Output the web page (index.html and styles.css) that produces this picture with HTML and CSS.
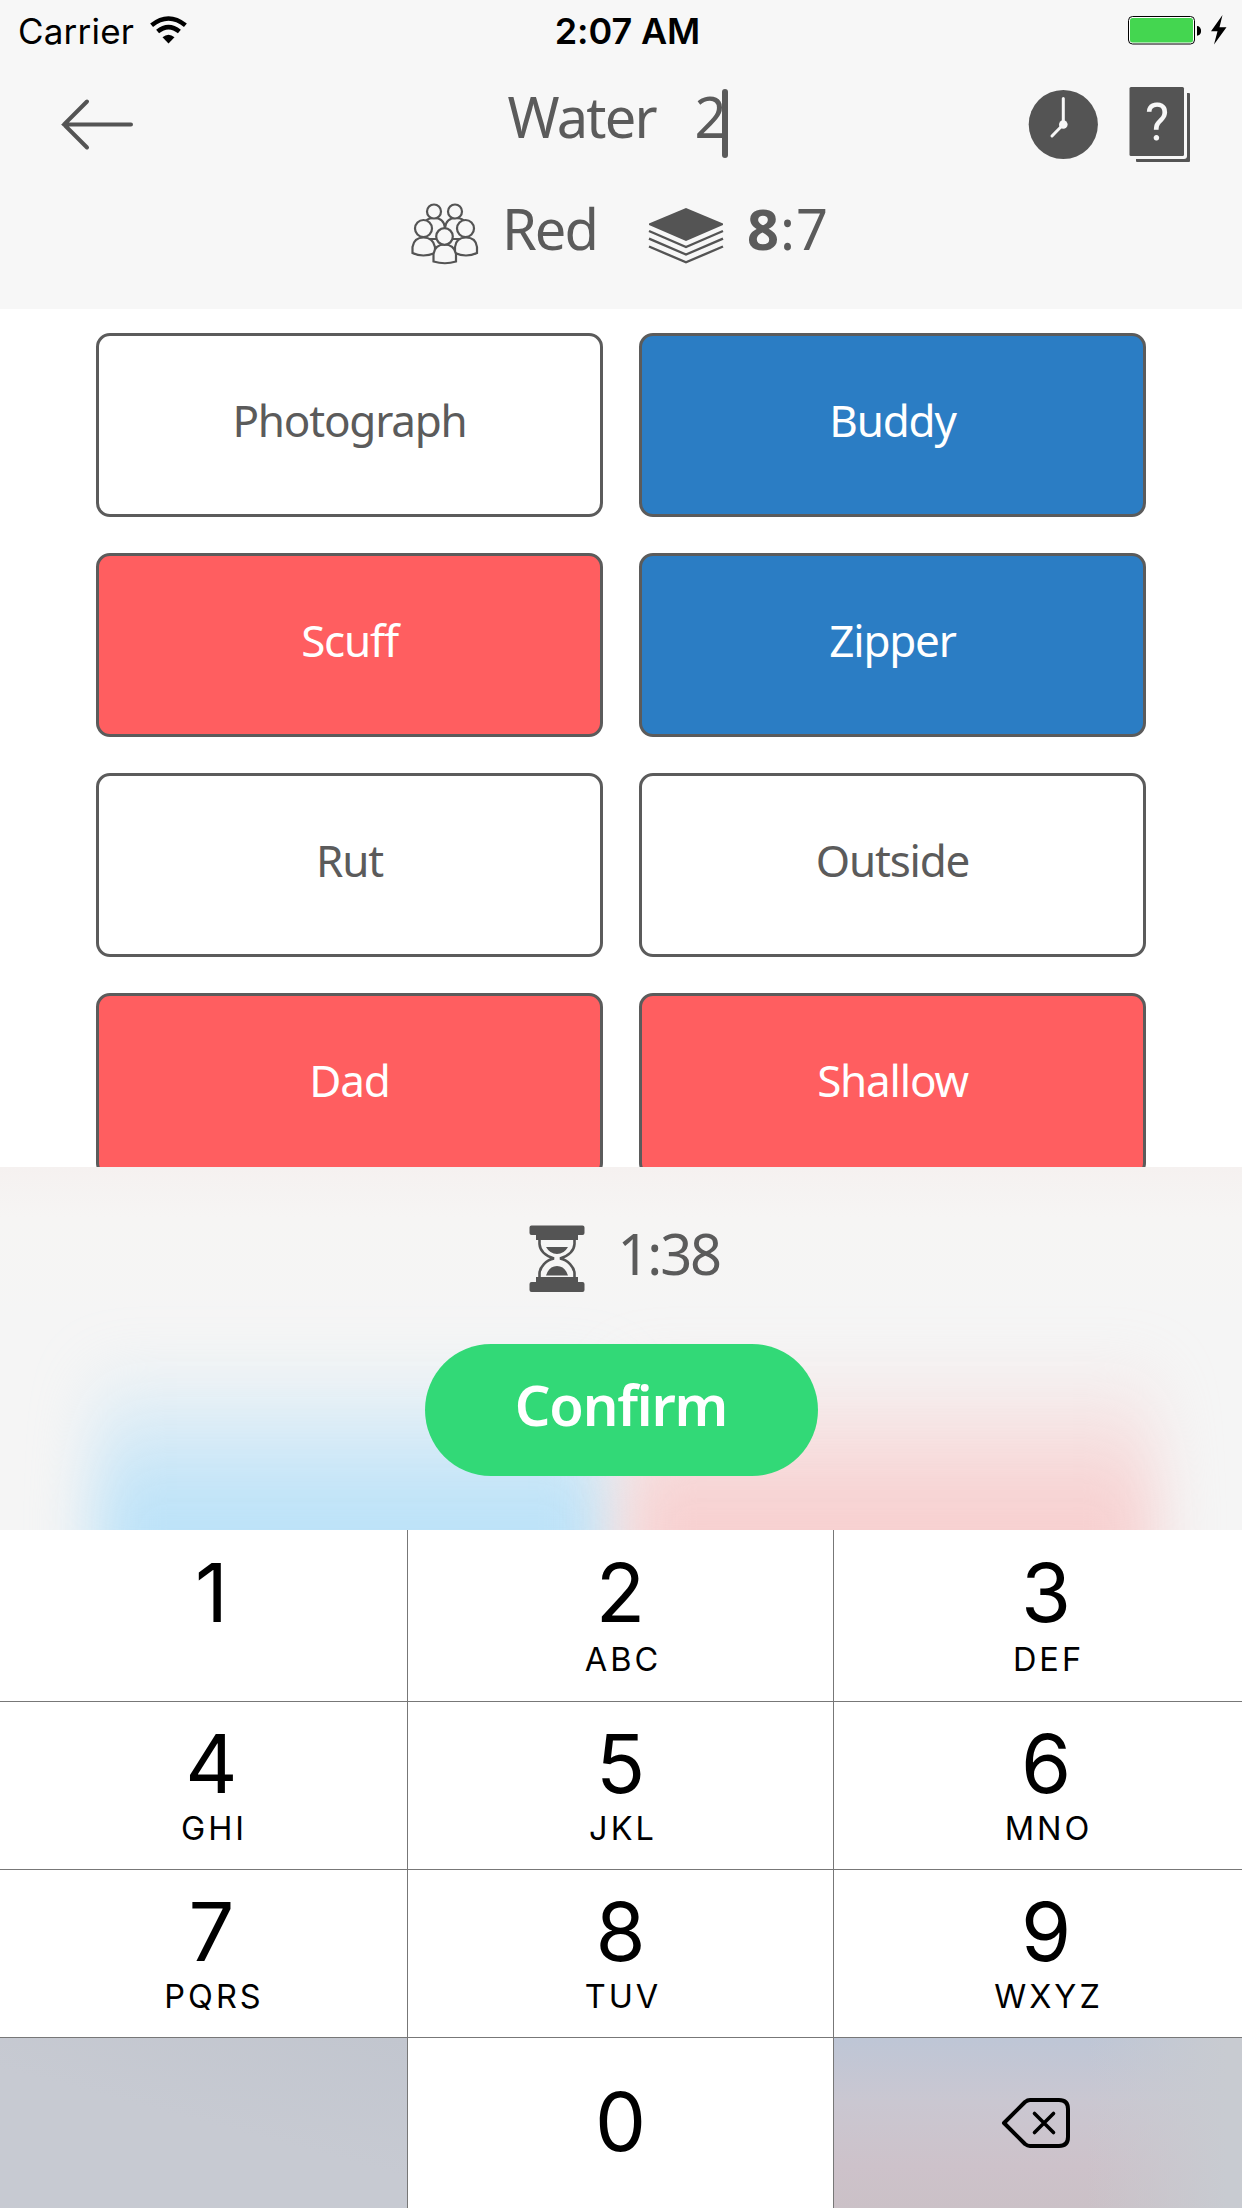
FILE: index.html
```html
<!DOCTYPE html>
<html lang="en">
<head>
<meta charset="utf-8">
<title>Water 2</title>
<link rel="stylesheet" href="styles.css">
</head>
<body>
<div class="screen">
  <header class="header">
    <div class="status">
      <div class="status-left">
        <span class="carrier">Carrier</span>
        <svg class="wifi" width="37" height="28" viewBox="0 0 37 28">
          <g fill="none" stroke="#000" stroke-width="4.6">
            <path d="M1.6 9.2Q18.500 -4.200 35.400 9.200"/>
            <path d="M7.600 15.600Q18.500 6.600 29.400 15.600"/>
          </g>
          <path d="M12.500 21.300Q18.500 16.200 24.500 21.300L18.500 27.500Z"/>
        </svg>
      </div>
      <span class="time">2:07 AM</span>
      <svg class="battery" width="100" height="32" viewBox="0 0 100 32">
        <rect x="0.500" y="2.500" width="66" height="27.500" rx="4" fill="#fff" stroke="#000"/>
        <rect x="2" y="4" width="63" height="24.500" rx="2.500" fill="#44d650"/>
        <path d="M69 12a4 4.800 0 0 1 0 9.800z"/>
        <path d="M94.500 1L83 17.200h6.500L86 30.500 98.500 13.300h-7z"/>
      </svg>
    </div>
    <div class="navbar">
      <svg class="back" width="74" height="54" viewBox="0 0 74 54">
        <path d="M27 3.500L4 26.500 27 49.500M4 26.500H71" fill="none" stroke="#545454" stroke-width="4" stroke-linecap="round"/>
      </svg>
      <div class="clue"><span class="word">Water</span><span class="count">2</span><i class="caret"></i></div>
      <div class="actions">
        <svg width="70" height="78" viewBox="0 0 70 78">
          <circle cx="35.300" cy="39.500" r="34.600" fill="#545454"/>
          <path d="M35.300 13.500V39.500L24 51" fill="none" stroke="#f7f7f7" stroke-width="3" stroke-linecap="round"/>
          <circle cx="35.300" cy="39.500" r="4.300" fill="#f7f7f7"/>
        </svg>
        <svg width="62" height="78" viewBox="0 0 62 78">
          <rect x="7" y="8" width="54" height="69" rx="1" fill="#545454"/>
          <path d="M0 0H58V71a3 3 0 0 1-3 3H0z" fill="#f7f7f7"/>
          <rect x="0.500" y="2" width="54.500" height="69" rx="1.500" fill="#545454"/>
          <text x="28" y="55" text-anchor="middle" class="help-mark">?</text>
        </svg>
      </div>
    </div>
    <div class="info">
      <svg class="people" width="68" height="62" viewBox="0 0 68 62">
        <g fill="#f7f7f7" stroke="#545454" stroke-width="2.2">
          <path d="M12 36V25Q13 15 23 15T34 25V36Z"/><circle cx="23" cy="8.500" r="7"/>
          <path d="M34 36V25Q35 15 45 15T56 25V36Z"/><circle cx="44" cy="8.500" r="7"/>
          <path d="M1.500 50V44Q3 34.500 12.500 34.500T24 44V50Q12 55 1.500 50Z"/><circle cx="12.500" cy="25.500" r="8.500"/>
          <path d="M44 50V44Q45 34.500 55 34.500T66 44V50Q55 55 44 50Z"/><circle cx="54.500" cy="25.500" r="8.500"/>
          <path d="M22.500 58.500V51Q24 41.500 33.500 41.500T45 51V58.500Q34 62 22.500 58.500Z"/><circle cx="33.500" cy="33.500" r="8.300"/>
        </g>
      </svg>
      <span class="team">Red</span>
      <svg class="stack" width="76" height="58" viewBox="0 0 76 58">
        <path d="M38 1L75 16.500V18L38 34 1 18V16.500Z" fill="#545454"/>
        <path d="M1 24L38 40 75 24M1 31.700L38 47.500 75 31.700M1 39.500L38 55.300 75 39.500" fill="none" stroke="#545454" stroke-width="2.400"/>
      </svg>
      <span class="score"><b>8</b>:7</span>
    </div>
  </header>

  <main class="board">
    <div class="card">Photograph</div>
    <div class="card blue">Buddy</div>
    <div class="card red">Scuff</div>
    <div class="card blue">Zipper</div>
    <div class="card">Rut</div>
    <div class="card">Outside</div>
    <div class="card red">Dad</div>
    <div class="card red">Shallow</div>
  </main>

  <section class="panel">
    <i class="glow glow-blue"></i>
    <i class="glow glow-red"></i>
    <div class="timer">
      <svg width="56" height="68" viewBox="0 0 56 68">
        <path d="M2.500 .5H53.500a2 2 0 0 1 2 2V8a2 2 0 0 1-2 2H49v5H7v-5H2.500a2 2 0 0 1-2-2V2.500a2 2 0 0 1 2-2zM7 52H49v5h4.500a2 2 0 0 1 2 2v6a2 2 0 0 1-2 2h-51a2 2 0 0 1-2-2v-6a2 2 0 0 1 2-2H7z" fill="#545454"/>
        <path d="M10.500 14V19C11 27 17 31 25 33.500 17 35 11 42 10.500 48V53M45.500 14V19C45 27 39 31 31 33.500 39 35 45 42 45.500 48V53" fill="none" stroke="#545454" stroke-width="2.600"/>
        <path d="M17 22H39Q35 29 28 29T17 22ZM17 50.500Q20 41 28 41T39 50.500Z" fill="#545454"/>
      </svg>
      <span class="remaining">1:38</span>
    </div>
    <button class="confirm">Confirm</button>
  </section>

  <section class="keypad">
    <div class="key first"><span class="digit">1</span></div>
    <div class="key first"><span class="digit">2</span><span class="letters">ABC</span></div>
    <div class="key first"><span class="digit">3</span><span class="letters">DEF</span></div>
    <div class="key"><span class="digit">4</span><span class="letters">GHI</span></div>
    <div class="key"><span class="digit">5</span><span class="letters">JKL</span></div>
    <div class="key"><span class="digit">6</span><span class="letters">MNO</span></div>
    <div class="key"><span class="digit">7</span><span class="letters">PQRS</span></div>
    <div class="key"><span class="digit">8</span><span class="letters">TUV</span></div>
    <div class="key"><span class="digit">9</span><span class="letters">WXYZ</span></div>
    <div class="key blank"></div>
    <div class="key zero"><span class="digit">0</span></div>
    <div class="key delete">
      <svg width="70" height="52" viewBox="0 0 70 52">
        <path d="M3 26L24 5Q26.500 3 29 3H58Q67 3 67 12V40Q67 49 58 49H29Q26.500 49 24 47Z" fill="none" stroke="#000" stroke-width="4" stroke-linejoin="round"/>
        <path d="M33.500 16.500L52.500 35.500M52.500 16.500L33.500 35.500" stroke="#000" stroke-width="3.600" stroke-linecap="round"/>
      </svg>
    </div>
  </section>
</div>
</body>
</html>
```
FILE: styles.css
```css
* { box-sizing: border-box; }

body {
  margin: 0;
  background: #fff;
  color: #5b5b5b;
  font-family: "Noto Sans", "Open Sans", sans-serif;
}

svg { display: block; flex: none; }

.screen {
  width: 1242px;
  height: 2208px;
  display: flex;
  flex-direction: column;
  overflow: hidden;
}

/* Header */
.header {
  height: 309px;
  flex: none;
  background: #f7f7f7;
}

.status {
  height: 60px;
  display: grid;
  grid-template-columns: 1fr auto 1fr;
  padding: 0 14px 0 18px;
  color: #000;
  font: 36px/62px Inter, sans-serif;
}

.status-left { display: flex; }
.carrier { width: 132px; font-size: 35px; letter-spacing: 0.2px; }
.wifi { margin-top: 16px; }
.time { font-weight: 600; padding-left: 9px; letter-spacing: -0.1px; }
.battery { justify-self: end; margin-top: 14px; }

.navbar {
  height: 129px;
  display: grid;
  grid-template-columns: 1fr auto 1fr;
  padding: 0 51px 0 60px;
}

.back { margin-top: 38px; }

.clue {
  display: flex;
  font-size: 56px;
  line-height: 76px;
  padding: 18px 16px 0 0;
}

.word { width: 187px; letter-spacing: -1.8px; }
.count { width: 27px; }

.caret {
  width: 6px;
  height: 69px;
  margin-top: 11px;
  border-radius: 3px;
  background: #5b5b5b;
}

.actions {
  display: flex;
  justify-content: flex-end;
  gap: 31px;
  padding-top: 25px;
}

.help-mark {
  font: 51px Roboto, sans-serif;
  fill: #f7f7f7;
}

.info {
  height: 120px;
  display: flex;
  padding-left: 411px;
  font-size: 56px;
  line-height: 76px;
}

.people { margin-top: 14px; }
.team { margin-left: 23px; width: 146px; letter-spacing: -2px; }
.team, .score { padding-top: 1px; }
.stack { margin-top: 18px; }
.score { margin-left: 23px; letter-spacing: 1px; }

/* Word cards */
.board {
  height: 858px;
  flex: none;
  overflow: hidden;
  display: grid;
  grid-template-columns: 507px 507px;
  grid-auto-rows: 184px;
  gap: 36px;
  padding: 24px 96px 0;
}

.card {
  border: 3px solid #5b5b5b;
  border-radius: 14px;
  padding-top: 52px;
  text-align: center;
  font-size: 44px;
  line-height: 64px;
  letter-spacing: -1.2px;
}

.blue { background: #2b7dc4; color: #fff; }
.red { background: #ff5e60; color: #fff; }

/* Timer and confirm */
.panel {
  position: relative;
  height: 363px;
  flex: none;
  overflow: hidden;
  display: flex;
  flex-direction: column;
  align-items: center;
  background: linear-gradient(#f5f1f0, #f6f5f4 50px, #f5f5f5 150px);
}

.glow {
  position: absolute;
  top: 190px;
  height: 320px;
  filter: blur(30px);
}

.glow-blue { left: 95px; width: 515px; background: linear-gradient(rgba(188, 226, 248, 0), #bce2f8 150px); }
.glow-red { left: 625px; width: 530px; background: linear-gradient(rgba(247, 208, 208, 0), #f7d0d0 150px); }

.timer {
  position: relative;
  width: 184px;
  margin-left: -1px;
  height: 177px;
  display: flex;
  gap: 34px;
  padding-top: 58px;
}

.remaining {
  font-size: 56px;
  line-height: 76px;
  margin-top: -10px;
  margin-left: -1px;
  letter-spacing: -2.2px;
}

.confirm {
  position: relative;
  width: 393px;
  height: 132px;
  border: 0;
  border-radius: 66px;
  padding: 0 0 12px;
  background: #32d977;
  color: #fff;
  font: 600 56px/76px "Noto Sans", "Open Sans", sans-serif;
  letter-spacing: -1.2px;
}

/* Number keypad */
.keypad {
  height: 678px;
  flex: none;
  display: grid;
  grid-template-columns: 407px 425px 408px;
  grid-template-rows: 171px 167px 167px 170px;
  gap: 1px;
  background: #777;
  color: #000;
  font-family: Inter, sans-serif;
}

.key {
  display: flex;
  flex-direction: column;
  align-items: center;
  background: #fff;
  padding-top: 12px;
}

.key:nth-child(3n + 1) { padding-left: 16px; }
.key:nth-child(3n) { padding-left: 16px; }

.digit { font-size: 81px; line-height: 100px; height: 98px; }
.letters { font-size: 32.5px; line-height: 40px; letter-spacing: 3px; padding-left: 5px; margin-top: -3px; }
.first { padding-top: 13px; }
.first .letters { margin-top: -1px; }
.zero { padding-top: 34px; }

.blank { background: linear-gradient(195deg, #c2c6cf, #c7cad2 50%, #c7cad2); }

.key.delete {
  padding: 59px 4px 0 0;
  background:
    linear-gradient(90deg, rgba(200, 203, 209, 0) 62%, #c8cbd1 96%),
    linear-gradient(#bec6d6, #cac7d1 38%, #cdc2ca 75%, #cbc1c7);
}
```
